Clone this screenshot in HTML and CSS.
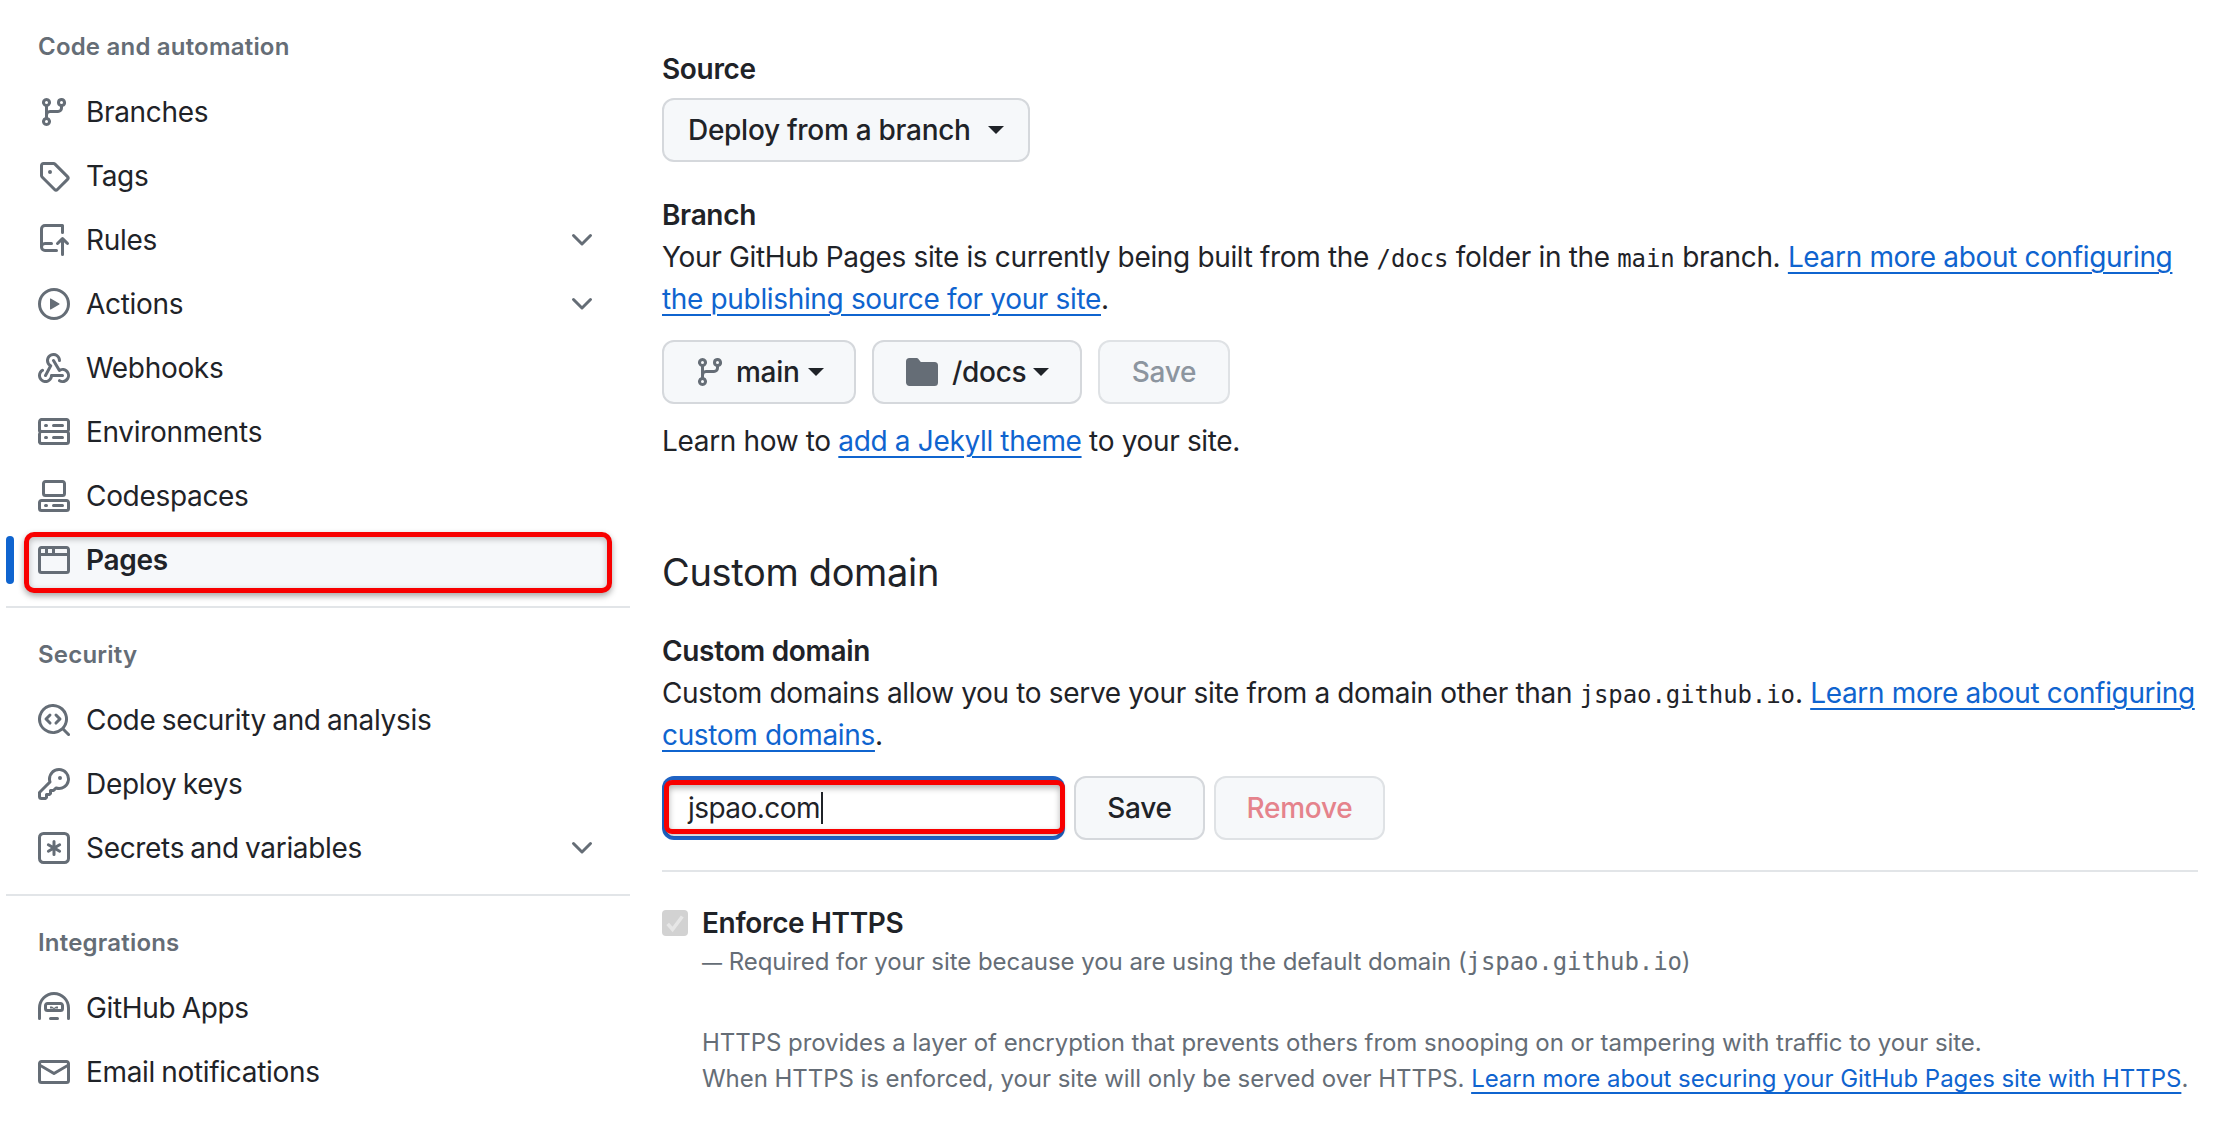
FILE: index.html
```html
<!DOCTYPE html>
<html lang="en">
<head>
    <meta charset="UTF-8">
    <title>Pages settings</title>
    <link rel="stylesheet" href="styles.css">
</head>
<body>
    <aside class="sidebar">
        <h3 class="nav-heading">Code and automation</h3>
        <a class="nav-row">
            <svg class="icon" viewBox="0 0 16 16"><path d="M9.5 3.25a2.25 2.25 0 1 1 3 2.122V6A2.5 2.5 0 0 1 10 8.5H6a1 1 0 0 0-1 1v1.128a2.251 2.251 0 1 1-1.5 0V5.372a2.25 2.25 0 1 1 1.5 0v1.836A2.493 2.493 0 0 1 6 7h4a1 1 0 0 0 1-1v-.628A2.25 2.25 0 0 1 9.5 3.25Zm-6 0a.75.75 0 1 0 1.5 0 .75.75 0 0 0-1.5 0Zm8.25-.75a.75.75 0 1 0 0 1.5.75.75 0 0 0 0-1.5ZM4.25 12a.75.75 0 1 0 0 1.5.75.75 0 0 0 0-1.5Z"/></svg>
            <span>Branches</span>
        </a>
        <a class="nav-row">
            <svg class="icon" viewBox="0 0 16 16"><path d="M1 7.775V2.75C1 1.784 1.784 1 2.75 1h5.025c.464 0 .91.184 1.238.513l6.25 6.25a1.75 1.75 0 0 1 0 2.474l-5.026 5.026a1.75 1.75 0 0 1-2.474 0l-6.25-6.25A1.752 1.752 0 0 1 1 7.775Zm1.5 0c0 .066.026.13.073.177l6.25 6.25a.25.25 0 0 0 .354 0l5.025-5.025a.25.25 0 0 0 0-.354l-6.25-6.25a.25.25 0 0 0-.177-.073H2.75a.25.25 0 0 0-.25.25ZM6 5a1 1 0 1 1 0 2 1 1 0 0 1 0-2Z"/></svg>
            <span>Tags</span>
        </a>
        <a class="nav-row">
            <svg class="icon" viewBox="0 0 16 16"><path d="M1 2.5A2.5 2.5 0 0 1 3.5 0h8.75a.75.75 0 0 1 .75.75v3.5a.75.75 0 0 1-1.5 0V1.5h-8a1 1 0 0 0-1 1v6.708A2.493 2.493 0 0 1 3.5 9h3.25a.75.75 0 0 1 0 1.5H3.5a1 1 0 0 0 0 2h5.75a.75.75 0 0 1 0 1.5H3.5A2.5 2.5 0 0 1 1 11.5Zm13.23 7.79h-.001l-1.224-1.224v6.184a.75.75 0 0 1-1.5 0V9.066L10.28 10.29a.75.75 0 0 1-1.06-1.061l2.505-2.504a.75.75 0 0 1 1.06 0L15.29 9.23a.751.751 0 0 1-.018 1.042.751.751 0 0 1-1.042.018Z"/></svg>
            <span>Rules</span>
            <svg class="icon chevron" viewBox="0 0 16 16"><path d="M12.78 5.22a.749.749 0 0 1 0 1.06l-4.25 4.25a.749.749 0 0 1-1.06 0L3.22 6.28a.749.749 0 1 1 1.06-1.06L8 8.939l3.72-3.719a.749.749 0 0 1 1.06 0Z"/></svg>
        </a>
        <a class="nav-row">
            <svg class="icon" viewBox="0 0 16 16"><path d="M8 0a8 8 0 1 1 0 16A8 8 0 0 1 8 0ZM1.5 8a6.5 6.5 0 1 0 13 0 6.5 6.5 0 0 0-13 0Zm4.879-2.773 4.264 2.559a.25.25 0 0 1 0 .428l-4.264 2.559A.25.25 0 0 1 6 10.559V5.442a.25.25 0 0 1 .379-.215Z"/></svg>
            <span>Actions</span>
            <svg class="icon chevron" viewBox="0 0 16 16"><path d="M12.78 5.22a.749.749 0 0 1 0 1.06l-4.25 4.25a.749.749 0 0 1-1.06 0L3.22 6.28a.749.749 0 1 1 1.06-1.06L8 8.939l3.72-3.719a.749.749 0 0 1 1.06 0Z"/></svg>
        </a>
        <a class="nav-row">
            <svg class="icon" viewBox="0 0 16 16"><path d="M5.5 4.25a2.25 2.25 0 0 1 4.5 0 .75.75 0 0 0 1.5 0 3.75 3.75 0 1 0-6.14 2.889l-2.272 4.258a.75.75 0 0 0 1.324.706L7 7.25a.75.75 0 0 0-.309-1.015A2.25 2.25 0 0 1 5.5 4.25Z"/><path d="M7.364 3.607a.75.75 0 0 1 1.03.257l2.608 4.349a3.75 3.75 0 1 1-.628 6.785.75.75 0 0 1 .752-1.299 2.25 2.25 0 1 0-.033-3.88.75.75 0 0 1-1.03-.256L7.107 4.636a.75.75 0 0 1 .257-1.03Z"/><path d="M2.9 8.776A.75.75 0 0 1 2.625 9.8 2.25 2.25 0 1 0 6 11.75a.75.75 0 0 1 .75-.751h5.5a.75.75 0 0 1 0 1.5H7.425a3.751 3.751 0 1 1-5.55-3.998.75.75 0 0 1 1.024.274Z"/></svg>
            <span>Webhooks</span>
        </a>
        <a class="nav-row">
            <svg class="icon" viewBox="0 0 16 16"><path d="M1.75 1h12.5c.966 0 1.75.784 1.75 1.75v4c0 .372-.116.717-.314 1 .198.283.314.628.314 1v4a1.75 1.75 0 0 1-1.75 1.75H1.75A1.75 1.75 0 0 1 0 13.25v-4c0-.372.116-.717.314-1a1.739 1.739 0 0 1-.314-1v-4C0 1.784.784 1 1.75 1ZM1.5 2.75v4c0 .138.112.25.25.25h12.5a.25.25 0 0 0 .25-.25v-4a.25.25 0 0 0-.25-.25H1.75a.25.25 0 0 0-.25.25Zm.25 5.75a.25.25 0 0 0-.25.25v4c0 .138.112.25.25.25h12.5a.25.25 0 0 0 .25-.25v-4a.25.25 0 0 0-.25-.25ZM7 4.75A.75.75 0 0 1 7.75 4h4.5a.75.75 0 0 1 0 1.5h-4.5A.75.75 0 0 1 7 4.75Zm.75 5.25h4.5a.75.75 0 0 1 0 1.5h-4.5a.75.75 0 0 1 0-1.5ZM3 4.75A.75.75 0 0 1 3.75 4h.5a.75.75 0 0 1 0 1.5h-.5A.75.75 0 0 1 3 4.75ZM3.75 10h.5a.75.75 0 0 1 0 1.5h-.5a.75.75 0 0 1 0-1.5Z"/></svg>
            <span>Environments</span>
        </a>
        <a class="nav-row">
            <svg class="icon" viewBox="0 0 16 16"><path d="M0 11.25c0-.966.784-1.75 1.75-1.75h12.5c.966 0 1.75.784 1.75 1.75v3A1.75 1.75 0 0 1 14.25 16H1.75A1.75 1.75 0 0 1 0 14.25Zm2-9.5C2 .784 2.784 0 3.75 0h8.5C13.216 0 14 .784 14 1.75v5a1.75 1.75 0 0 1-1.75 1.75h-8.5A1.75 1.75 0 0 1 2 6.75Zm1.75-.25a.25.25 0 0 0-.25.25v5c0 .138.112.25.25.25h8.5a.25.25 0 0 0 .25-.25v-5a.25.25 0 0 0-.25-.25Zm-2 9.5a.25.25 0 0 0-.25.25v3c0 .138.112.25.25.25h12.5a.25.25 0 0 0 .25-.25v-3a.25.25 0 0 0-.25-.25Z"/><path d="M7 12.75a.75.75 0 0 1 .75-.75h4.5a.75.75 0 0 1 0 1.5h-4.5a.75.75 0 0 1-.75-.75Zm-4 0a.75.75 0 0 1 .75-.75h.5a.75.75 0 0 1 0 1.5h-.5a.75.75 0 0 1-.75-.75Z"/></svg>
            <span>Codespaces</span>
        </a>
        <a class="nav-row nav-active">
            <svg class="icon" viewBox="0 0 16 16"><path d="M0 2.75C0 1.784.784 1 1.75 1h12.5c.966 0 1.75.784 1.75 1.75v10.5A1.75 1.75 0 0 1 14.25 15H1.75A1.75 1.75 0 0 1 0 13.25ZM14.5 6h-13v7.25c0 .138.112.25.25.25h12.5a.25.25 0 0 0 .25-.25Zm-6-3.5v2h6v-1.75a.25.25 0 0 0-.25-.25ZM5 2.5v2h2v-2Zm-3.25 0a.25.25 0 0 0-.25.25V4.5h2v-2Z"/></svg>
            <span>Pages</span>
        </a>
        <hr class="nav-divider">
        <h3 class="nav-heading">Security</h3>
        <a class="nav-row">
            <svg class="icon" viewBox="0 0 16 16"><path d="M8.47 4.97a.75.75 0 0 0 0 1.06L9.94 7.5 8.47 8.97a.75.75 0 1 0 1.06 1.06l2-2a.75.75 0 0 0 0-1.06l-2-2a.75.75 0 0 0-1.06 0ZM6.53 6.03a.75.75 0 0 0-1.06-1.06l-2 2a.75.75 0 0 0 0 1.06l2 2a.75.75 0 1 0 1.06-1.06L5.06 7.5l1.47-1.47Z"/><path d="M12.246 13.307a7.501 7.501 0 1 1 1.06-1.06l2.474 2.473a.749.749 0 0 1-.326 1.275.749.749 0 0 1-.734-.215ZM1.5 7.5a6.002 6.002 0 0 0 3.608 5.504 6.002 6.002 0 0 0 6.486-1.117.748.748 0 0 1 .292-.293A6 6 0 1 0 1.5 7.5Z"/></svg>
            <span>Code security and analysis</span>
        </a>
        <a class="nav-row">
            <svg class="icon" viewBox="0 0 16 16"><path d="M10.5 0a5.499 5.499 0 1 1-1.288 10.848l-.932.932a.749.749 0 0 1-.53.22H7v.75a.749.749 0 0 1-.22.53l-.5.5a.749.749 0 0 1-.53.22H5v.75a.749.749 0 0 1-.22.53l-.5.5a.749.749 0 0 1-.53.22h-2A1.75 1.75 0 0 1 0 14.25v-2c0-.199.079-.389.22-.53l4.932-4.932A5.5 5.5 0 0 1 10.5 0Zm-4 5.5c-.001.431.069.86.205 1.269a.75.75 0 0 1-.181.768L1.5 12.56v1.69c0 .138.112.25.25.25h1.69l.06-.06v-1.19a.75.75 0 0 1 .75-.75h1.19l.06-.06v-1.19a.75.75 0 0 1 .75-.75h1.19l1.023-1.025a.75.75 0 0 1 .768-.18A4 4 0 1 0 6.5 5.5ZM11 6a1 1 0 1 1 0-2 1 1 0 0 1 0 2Z"/></svg>
            <span>Deploy keys</span>
        </a>
        <a class="nav-row">
            <svg class="icon" viewBox="0 0 16 16"><path d="M0 2.75A2.75 2.75 0 0 1 2.75 0h10.5A2.75 2.75 0 0 1 16 2.75v10.5A2.75 2.75 0 0 1 13.25 16H2.75A2.75 2.75 0 0 1 0 13.25ZM2.75 1.5c-.69 0-1.25.56-1.25 1.25v10.5c0 .69.56 1.25 1.25 1.25h10.5c.69 0 1.25-.56 1.25-1.25V2.75c0-.69-.56-1.25-1.25-1.25Z"/><path d="M8 4a.75.75 0 0 1 .75.75V6.7l1.69-.975a.75.75 0 0 1 .75 1.3L9.5 8l1.69.976a.75.75 0 0 1-.75 1.298L8.75 9.299v1.951a.75.75 0 0 1-1.5 0V9.299l-1.69.975a.75.75 0 0 1-.75-1.298L6.5 8l-1.69-.975a.75.75 0 0 1 .75-1.3l1.69.976V4.75A.75.75 0 0 1 8 4Z"/></svg>
            <span>Secrets and variables</span>
            <svg class="icon chevron" viewBox="0 0 16 16"><path d="M12.78 5.22a.749.749 0 0 1 0 1.06l-4.25 4.25a.749.749 0 0 1-1.06 0L3.22 6.28a.749.749 0 1 1 1.06-1.06L8 8.939l3.72-3.719a.749.749 0 0 1 1.06 0Z"/></svg>
        </a>
        <hr class="nav-divider">
        <h3 class="nav-heading">Integrations</h3>
        <a class="nav-row">
            <svg class="icon" viewBox="0 0 16 16"><path d="M0 8a8 8 0 0 1 16 0v5.25a.75.75 0 0 1-1.5 0V8a6.5 6.5 0 1 0-13 0v5.25a.75.75 0 0 1-1.5 0Zm3-1.25C3 5.784 3.784 5 4.75 5h6.5c.966 0 1.75.784 1.75 1.75v1.5A1.75 1.75 0 0 1 11.25 10h-6.5A1.75 1.75 0 0 1 3 8.25Zm1.75-.25a.25.25 0 0 0-.25.25v1.5c0 .138.112.25.25.25h6.5a.25.25 0 0 0 .25-.25v-1.5a.25.25 0 0 0-.25-.25ZM6.25 12.5h3.5a.75.75 0 0 1 0 1.5h-3.5a.75.75 0 0 1 0-1.5Z"/><path d="M6 7.25h1l1 .75 1-.75h1v1h-1.5L8 8.7l-.5-.45H6Z"/></svg>
            <span>GitHub Apps</span>
        </a>
        <a class="nav-row">
            <svg class="icon" viewBox="0 0 16 16"><path d="M1.75 2h12.5c.966 0 1.75.784 1.75 1.75v8.5A1.75 1.75 0 0 1 14.25 14H1.75A1.75 1.75 0 0 1 0 12.25v-8.5C0 2.784.784 2 1.75 2ZM1.5 12.251c0 .138.112.25.25.25h12.5a.25.25 0 0 0 .25-.25V5.809L8.38 9.397a.75.75 0 0 1-.76 0L1.5 5.809v6.442Zm13-8.181v-.32a.25.25 0 0 0-.25-.25H1.75a.25.25 0 0 0-.25.25v.32L8 7.88Z"/></svg>
            <span>Email notifications</span>
        </a>
    </aside>

    <main class="content">
        <h4 class="label source-label">Source</h4>
        <button class="btn btn-deploy">Deploy from a branch <i class="caret"></i></button>

        <h4 class="label branch-label">Branch</h4>
        <p class="text">Your GitHub Pages site is currently being built from the <code>/docs</code> folder in the <code>main</code> branch. <a class="link">Learn more about configuring the publishing source for your site</a>.</p>
        <div class="btn-row">
            <button class="btn btn-main">
                <svg class="icon" viewBox="0 0 16 16"><path d="M9.5 3.25a2.25 2.25 0 1 1 3 2.122V6A2.5 2.5 0 0 1 10 8.5H6a1 1 0 0 0-1 1v1.128a2.251 2.251 0 1 1-1.5 0V5.372a2.25 2.25 0 1 1 1.5 0v1.836A2.493 2.493 0 0 1 6 7h4a1 1 0 0 0 1-1v-.628A2.25 2.25 0 0 1 9.5 3.25Zm-6 0a.75.75 0 1 0 1.5 0 .75.75 0 0 0-1.5 0Zm8.25-.75a.75.75 0 1 0 0 1.5.75.75 0 0 0 0-1.5ZM4.25 12a.75.75 0 1 0 0 1.5.75.75 0 0 0 0-1.5Z"/></svg>
                <span>main</span><i class="caret"></i>
            </button>
            <button class="btn btn-docs">
                <svg class="icon" viewBox="0 0 16 16"><path d="M1.75 1A1.75 1.75 0 0 0 0 2.75v10.5C0 14.216.784 15 1.75 15h12.5A1.75 1.75 0 0 0 16 13.25v-8.5A1.75 1.75 0 0 0 14.25 3H7.5a.25.25 0 0 1-.2-.1l-.9-1.2C6.07 1.26 5.55 1 5 1H1.75Z"/></svg>
                <span>/docs</span><i class="caret"></i>
            </button>
            <button class="btn btn-disabled btn-save-off">Save</button>
        </div>
        <p class="text learn-line">Learn how to <a class="link">add a Jekyll theme</a> to your site.</p>

        <h2 class="section-title">Custom domain</h2>
        <h4 class="label domain-label">Custom domain</h4>
        <p class="text">Custom domains allow you to serve your site from a domain other than <code>jspao.github.io</code>. <a class="link">Learn more about configuring custom domains</a>.</p>
        <div class="domain-row">
            <div class="domain-input"><span>jspao.com</span><i class="text-caret"></i></div>
            <button class="btn btn-save">Save</button>
            <button class="btn btn-disabled btn-remove">Remove</button>
        </div>
        <hr class="divider">

        <div class="https-row">
            <span class="checkbox"><svg viewBox="0 0 16 16"><path d="M3.5 8.5 6.5 12l6-8" fill="none" stroke="#e6e6e6" stroke-width="2.2"/></svg></span>
            <strong>Enforce HTTPS</strong>
        </div>
        <p class="note"><span class="dash">—</span> Required for your site because you are using the default domain (<code>jspao.github.io</code>)</p>
        <p class="note note-gap">HTTPS provides a layer of encryption that prevents others from snooping on or tampering with traffic to your site.<br>When HTTPS is enforced, your site will only be served over HTTPS. <a class="link">Learn more about securing your GitHub Pages site with HTTPS</a>.</p>
    </main>
</body>
</html>
```

FILE: styles.css
```css
/* General Reset */
*, *::before, *::after {
    margin: 0;
    padding: 0;
    box-sizing: border-box;
    font-family: Inter, "Noto Sans", sans-serif;
}

body {
    width: 2236px;
    height: 1140px;
    overflow: hidden;
    display: flex;
    background: #ffffff;
    color: #1f2328;
    font-size: 28px;
    letter-spacing: -0.34px;
}

/* Sidebar */
.sidebar {
    width: 624px;
    margin-left: 6px;
    padding-top: 16px;
    flex-shrink: 0;
}

.nav-heading {
    height: 64px;
    line-height: 62px;
    padding-left: 32px;
    font-size: 24px;
    font-weight: 600;
    letter-spacing: 0.2px;
    color: #656d76;
}

.nav-row {
    position: relative;
    isolation: isolate;
    display: flex;
    align-items: center;
    gap: 16px;
    height: 64px;
    padding: 0 32px;
    color: #1f2328;
    letter-spacing: -0.32px;
    word-spacing: -1.3px;
}

.nav-row span {
    flex: 1;
}

.icon {
    width: 32px;
    height: 32px;
    flex-shrink: 0;
    fill: #656d76;
}

.nav-active {
    font-weight: 600;
}

/* blue marker on the current item */
.nav-active::before {
    content: "";
    position: absolute;
    left: 0;
    top: 8px;
    width: 8px;
    height: 48px;
    border-radius: 4px;
    background: #0f64cf;
}

/* red annotation box around the current item */
.nav-active::after {
    content: "";
    position: absolute;
    z-index: -1;
    left: 18px;
    top: 4px;
    width: 588px;
    height: 61px;
    border: 5px solid #f80000;
    border-radius: 10px;
    background: #f6f8fa;
    box-shadow: 0 3px 6px rgba(0, 0, 0, 0.35), inset 0 2px 6px rgba(0, 0, 0, 0.25);
}

.nav-divider {
    border: 0;
    height: 2px;
    margin: 14px 0 16px;
    background: #e2e5e8;
}

/* Main column */
.content {
    width: 1536px;
    margin-left: 32px;
    padding-top: 48px;
    flex-shrink: 0;
}

.label {
    font-size: 28px;
    font-weight: 600;
    line-height: 42px;
}

.branch-label {
    margin-top: 32px;
}

.domain-label {
    margin-top: 28px;
}

.text {
    line-height: 42px;
}

code {
    font-family: "DejaVu Sans Mono", "Liberation Mono", monospace;
    font-size: 24px;
    line-height: 1;
    letter-spacing: -0.1px;
}

.link {
    color: #0f64cf;
    text-decoration: underline;
    text-decoration-thickness: 2px;
    text-underline-offset: 5px;
}

.btn {
    display: inline-flex;
    align-items: center;
    height: 64px;
    border: 2px solid #d5d8dc;
    border-radius: 12px;
    background: #f6f8fa;
    color: #1f2328;
    font-size: 28px;
    font-weight: 500;
    letter-spacing: -0.28px;
    white-space: pre;
}

.caret {
    display: inline-block;
    width: 0;
    height: 0;
    border-top: 8px solid #1f2328;
    border-left: 8px solid transparent;
    border-right: 8px solid transparent;
}

.btn-deploy {
    width: 368px;
    margin-top: 8px;
    padding-left: 24px;
    gap: 10px;
}

.btn-row {
    display: flex;
    gap: 16px;
    margin-top: 20px;
}

.btn-main {
    width: 194px;
    padding-left: 30px;
    gap: 10px;
}

.btn-main .caret {
    margin-left: -2px;
}

.btn-docs {
    width: 210px;
    padding-left: 32px;
    gap: 14px;
}

.btn-docs .caret {
    margin-left: -7px;
}

.btn-disabled {
    justify-content: center;
    border-color: #dfe2e5;
    color: #8c959f;
}

.btn-save-off {
    width: 132px;
}

.learn-line {
    margin-top: 16px;
}

.section-title {
    margin-top: 80px;
    font-size: 38px;
    font-weight: 400;
    line-height: 60px;
}

/* Custom domain field */
.domain-row {
    display: flex;
    gap: 9px;
    margin-top: 20px;
}

.domain-input {
    position: relative;
    display: flex;
    align-items: center;
    width: 403px;
    height: 64px;
    padding-left: 26px;
    border-radius: 12px;
    background: #ffffff;
    box-shadow: inset 0 0 0 4px #1f63c4;
    letter-spacing: -0.55px;
}

/* red annotation box over the field */
.domain-input::after {
    content: "";
    position: absolute;
    left: 2px;
    right: 0;
    top: 4px;
    height: 54px;
    border: 5px solid #f80000;
    border-radius: 8px;
    box-shadow: inset 0 3px 6px rgba(0, 0, 0, 0.3), 0 2px 3px rgba(0, 0, 0, 0.2);
}

.text-caret {
    width: 2px;
    height: 32px;
    margin-left: 1px;
    background: #1f2328;
}

.btn-save {
    width: 131px;
    justify-content: center;
}

.btn-remove {
    width: 171px;
    color: #e5838c;
}

.divider {
    border: 0;
    height: 2px;
    margin-top: 30px;
    background: #e2e5e8;
}

/* Enforce HTTPS */
.https-row {
    display: flex;
    align-items: center;
    gap: 14px;
    height: 42px;
    margin-top: 30px;
}

.https-row strong {
    font-weight: 600;
}

.checkbox {
    display: block;
    width: 26px;
    height: 26px;
    border-radius: 4px;
    background: #d2d2d2;
}

.checkbox svg {
    display: block;
    width: 26px;
    height: 26px;
}

.note {
    margin-left: 40px;
    font-size: 24px;
    line-height: 36px;
    letter-spacing: -0.05px;
    color: #656d76;
}

.dash {
    font-size: 20px;
}

.note-gap {
    margin-top: 44px;
}
```
